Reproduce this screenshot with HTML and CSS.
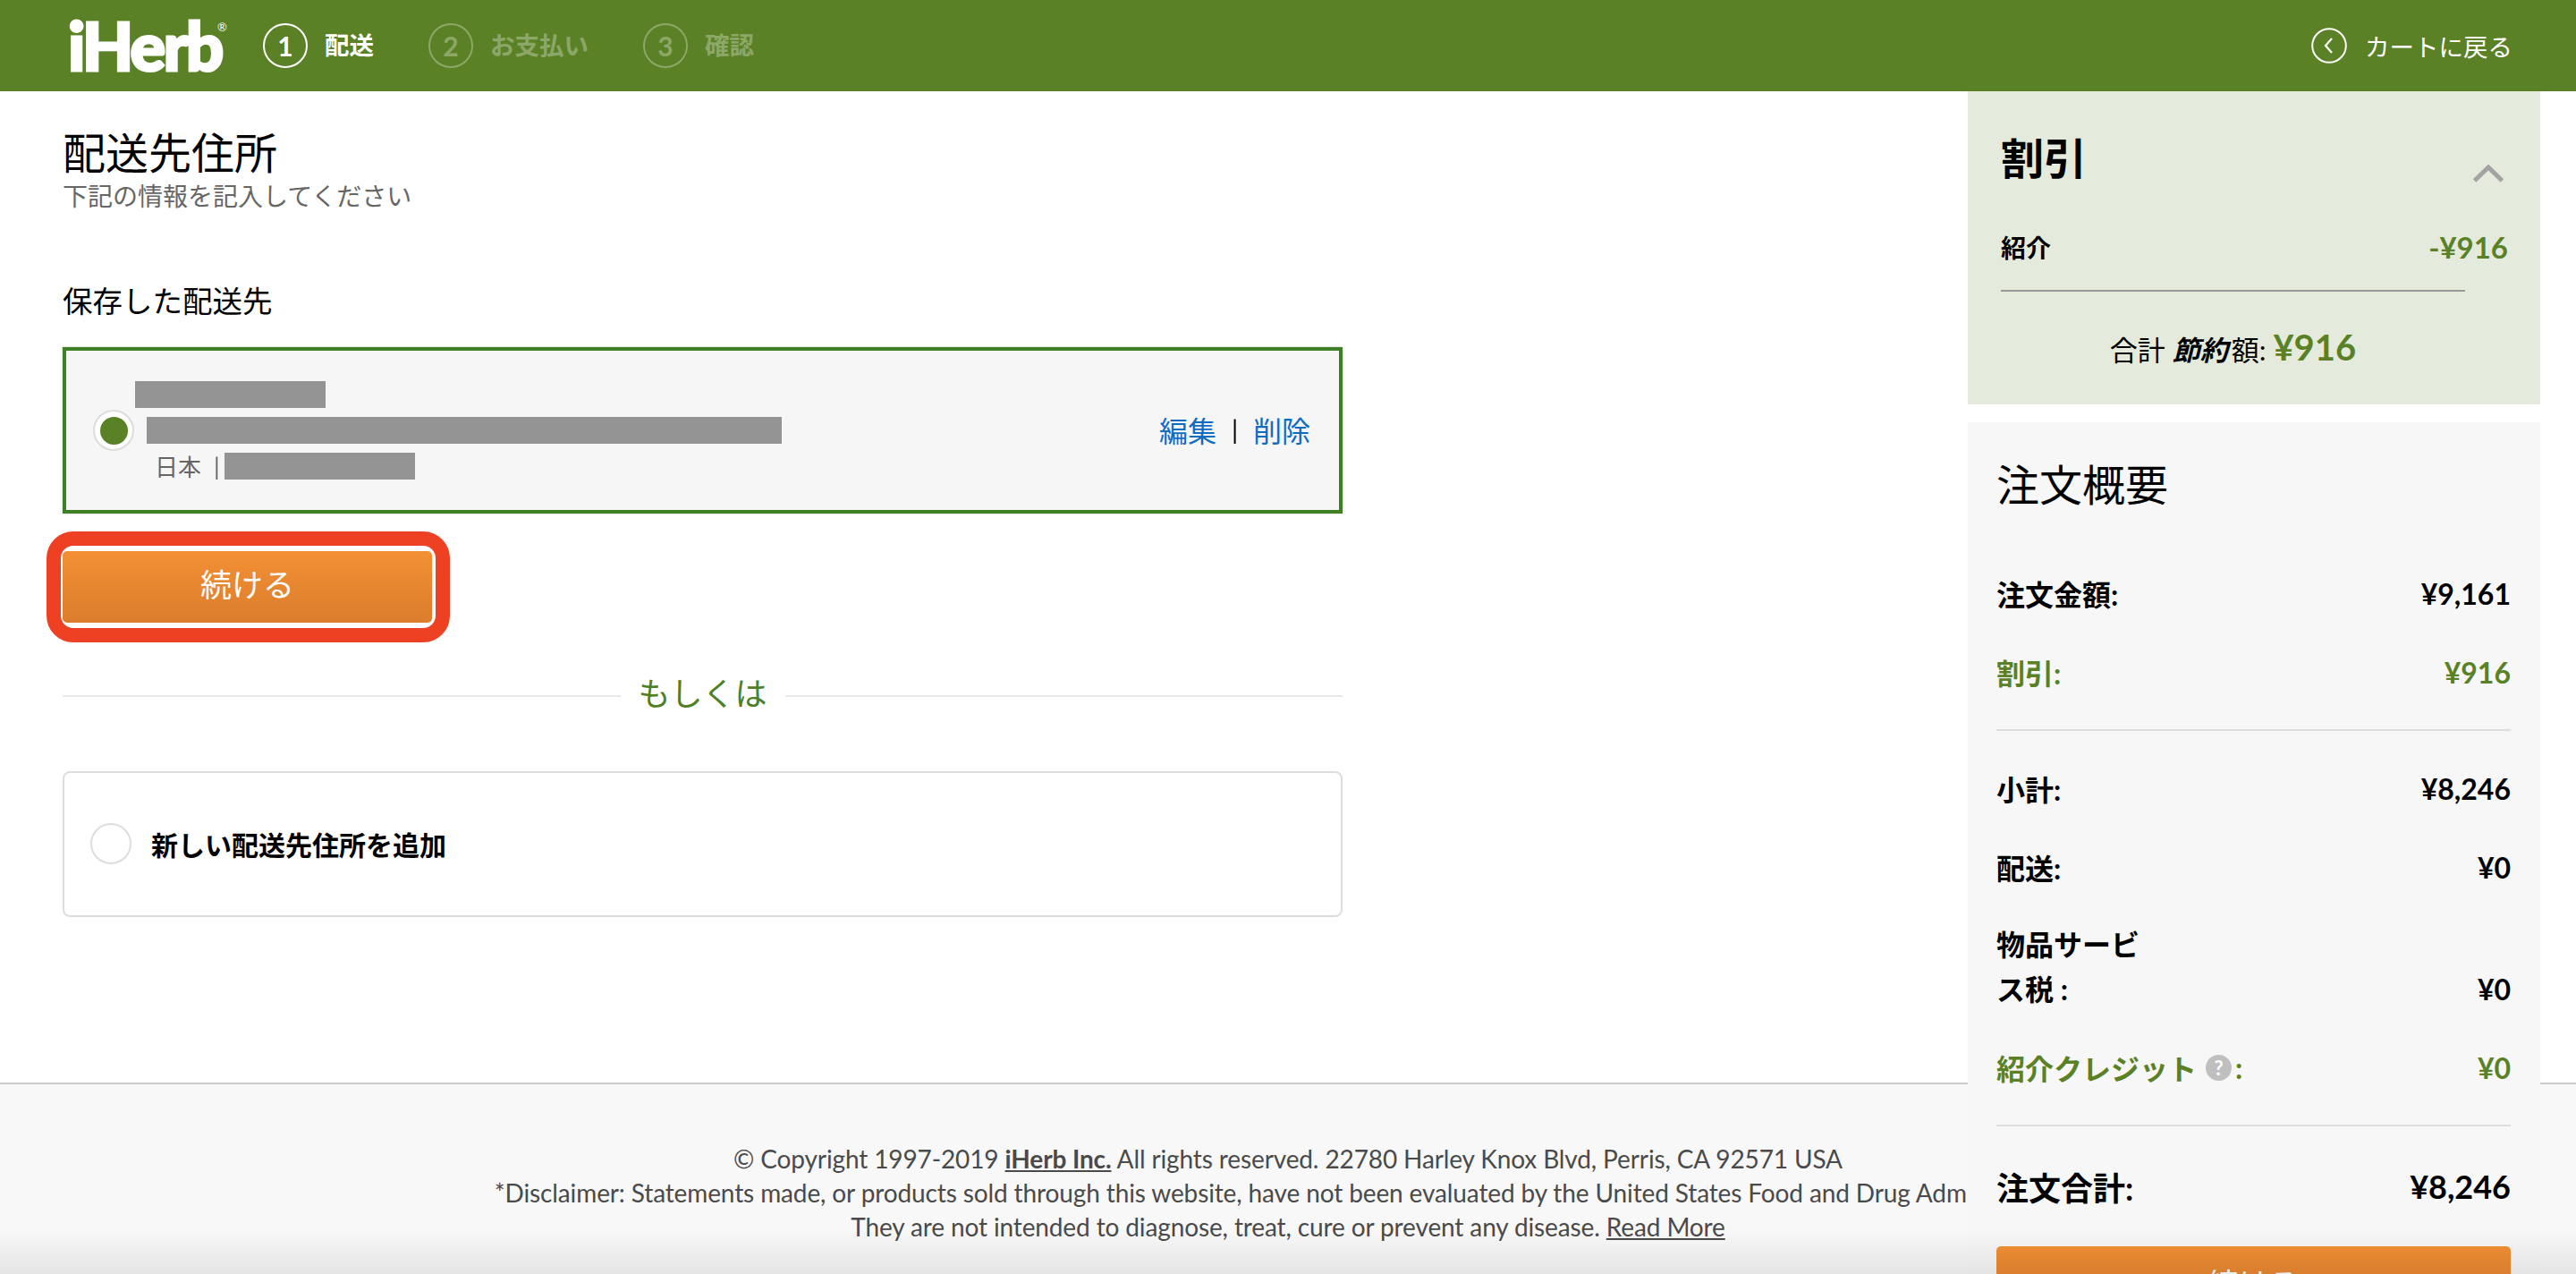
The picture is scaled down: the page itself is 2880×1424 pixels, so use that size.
FILE: index.html
```html
<!DOCTYPE html>
<html lang="ja">
<head>
<meta charset="utf-8">
<title>iHerb 配送先住所</title>
<link rel="stylesheet" href="styles.css">
</head>
<body>
<div class="page">
  <header class="topbar">
    <div class="brand">iHerb<sup class="reg">®</sup></div>
    <ol class="steps">
      <li class="step is-active"><span class="step-num">1</span><span class="step-label">配送</span></li>
      <li class="step"><span class="step-num">2</span><span class="step-label">お支払い</span></li>
      <li class="step"><span class="step-num">3</span><span class="step-label">確認</span></li>
    </ol>
    <a class="back">
      <svg class="back-icon" viewBox="0 0 40 40" aria-hidden="true"><circle cx="20" cy="20" r="18.8" fill="none" stroke="#fff" stroke-width="2"/><path d="M23 12 L16 20 L23 28" fill="none" stroke="#fff" stroke-width="2.2"/></svg>
      <span>カートに戻る</span>
    </a>
  </header>

  <main class="main">
    <h1 class="title">配送先住所</h1>
    <p class="subtitle">下記の情報を記入してください</p>
    <h2 class="saved-heading">保存した配送先</h2>

    <section class="address-card">
      <span class="radio is-checked"><span class="radio-dot"></span></span>
      <div class="address-lines">
        <div class="redact redact-name"></div>
        <div class="redact redact-street"></div>
        <div class="address-country"><span class="country">日本</span><span class="pipe">|</span><span class="redact redact-phone"></span></div>
      </div>
      <div class="address-actions"><a class="link">編集</a><span class="sep">|</span><a class="link">削除</a></div>
    </section>

    <button class="cta cta-main" type="button">続ける</button>

    <div class="or-divider"><span>もしくは</span></div>

    <section class="new-address">
      <span class="radio"></span>
      <strong>新しい配送先住所を追加</strong>
    </section>
  </main>

  <footer class="footer">
    <p>© Copyright 1997-2019 <a class="foot-brand">iHerb Inc.</a> All rights reserved. 22780 Harley Knox Blvd, Perris, CA 92571 USA</p>
    <p class="nowrap">*Disclaimer: Statements made, or products sold through this website, have not been evaluated by the United States Food and Drug Administration.</p>
    <p>They are not intended to diagnose, treat, cure or prevent any disease. <a class="foot-link">Read More</a></p>
  </footer>

  <aside class="sidebar">
    <section class="discount">
      <div class="discount-head">
        <h2>割引</h2>
        <svg class="chevron" viewBox="0 0 34 20" aria-hidden="true"><path d="M1.5 18 L17 3 L32.5 18" fill="none" stroke="#a3a3a3" stroke-width="5"/></svg>
      </div>
      <div class="discount-row"><strong>紹介</strong><span class="discount-amount">-¥916</span></div>
      <div class="discount-total"><span>合計 <b><i class="saved-word">節約</i></b>額:</span> <span class="saved">¥916</span></div>
    </section>

    <section class="summary">
      <h2 class="summary-title">注文概要</h2>
      <div class="row row-first"><span>注文金額:</span><span>¥9,161</span></div>
      <div class="row green"><span>割引:</span><span>¥916</span></div>
      <hr class="rule">
      <div class="row"><span>小計:</span><span>¥8,246</span></div>
      <div class="row"><span>配送:</span><span>¥0</span></div>
      <div class="row row-tall"><span>物品サービ<br>ス税 :</span><span>¥0</span></div>
      <div class="row green"><span class="credit">紹介クレジット<i class="help">?</i>:</span><span>¥0</span></div>
      <hr class="rule">
      <div class="row row-total"><span>注文合計:</span><span>¥8,246</span></div>
      <button class="cta cta-side" type="button">続ける</button>
    </section>
  </aside>

  <div class="bottom-shade"></div>
</div>
</body>
</html>
```

FILE: styles.css
```css
* { box-sizing: border-box; }
html, body { margin: 0; padding: 0; }
body { font-family: "Lato", "Noto Sans CJK JP", sans-serif; color: #000; background: #fff; }
h1, h2, p, ol { margin: 0; padding: 0; font-weight: 400; }
.page { position: relative; width: 2880px; height: 1424px; overflow: hidden; }

.topbar { display: flex; align-items: center; height: 102px; padding: 0 71px 0 76px; background: #5a8125; color: #fff; }
.brand { position: relative; width: 218px; font-family: "Lato", sans-serif; font-weight: 900; font-size: 74px; line-height: 102px; letter-spacing: -2.6px; -webkit-text-stroke: 3px #fff; }
.reg { position: absolute; left: 167px; top: 23px; font-size: 13px; line-height: 14px; font-weight: 400; letter-spacing: 0; -webkit-text-stroke: 0; }
.steps { display: flex; list-style: none; gap: 61px; }
.step { display: flex; align-items: center; gap: 19px; opacity: .3; }
.step.is-active { opacity: 1; }
.step-num { display: flex; align-items: center; justify-content: center; width: 50px; height: 50px; border: 2px solid #fff; border-radius: 50%; font-size: 30px; font-weight: 700; }
.step-label { font-size: 27.5px; font-weight: 700; line-height: 50px; }
.back { display: flex; align-items: center; gap: 20px; margin-left: auto; font-size: 27.5px; }
.back-icon { width: 40px; height: 40px; }

.main { height: 1108px; padding: 41px 0 0 70px; }
.title { font-size: 48px; line-height: 56px; }
.subtitle { margin-top: 3px; font-size: 28px; line-height: 34px; color: #666; }
.saved-heading { margin-top: 80px; font-size: 33.5px; line-height: 40px; }

.address-card { display: flex; align-items: center; width: 1431px; height: 186px; margin-top: 32px; padding: 0 32px 0 30px; border: 4px solid #3f7f25; background: #f6f6f6; box-shadow: 0 0 2px #bbb; }
.radio { display: flex; align-items: center; justify-content: center; flex: none; width: 46px; height: 46px; border: 2px solid #ddd; border-radius: 50%; background: #fff; }
.radio-dot { width: 31px; height: 31px; border-radius: 50%; background: #5a8125; }
.address-lines { display: flex; flex-direction: column; gap: 10px; margin-left: 1px; }
.redact { display: block; height: 30px; background: #949494; }
.redact-name { width: 213px; }
.redact-street { width: 710px; margin-left: 13px; }
.address-country { display: flex; align-items: center; height: 30px; margin-left: 22px; color: #666; font-size: 26px; }
.country { margin-top: -2px; }
.pipe { margin: 0 5px 0 14px; }
.redact-phone { width: 213px; }
.address-actions { display: flex; align-items: center; margin-left: auto; padding-bottom: 3px; font-size: 32px; }
.link { color: #0f6cc2; }
.sep { margin: 0 17px 0 17px; font-size: 28px; }

.cta { display: block; position: relative; border: 0; border-radius: 5px; color: #fff; font-family: inherit; background: linear-gradient(#f39035, #db7d2c); }
.cta-main { width: 413px; height: 80px; margin-top: 42px; padding-bottom: 10px; font-size: 35px; box-shadow: 0 0 0 5px #fff; }
.cta-main::after { content: ""; position: absolute; top: -22px; right: -20px; bottom: -22px; left: -18px; border: 16px solid #ee4023; border-radius: 30px; }

.or-divider { display: flex; align-items: center; gap: 20px; width: 1431px; margin-top: 59px; color: #4e7f22; font-size: 36px; line-height: 40px; }
.or-divider::before, .or-divider::after { content: ""; flex: 1; height: 2px; margin-top: 6px; background: #e8e8e8; }

.new-address { display: flex; align-items: center; gap: 22px; width: 1431px; height: 163px; margin-top: 67px; padding: 0 0 2px 29px; border: 2px solid #ddd; border-radius: 8px; font-size: 30px; }

.footer { height: 214px; padding-top: 64px; border-top: 2px solid #ccc; background: #f8f8f8; color: #4a4a4a; font-size: 28px; line-height: 38px; letter-spacing: -.12px; text-align: center; }
.nowrap { white-space: nowrap; }
.foot-brand { font-weight: 700; text-decoration: underline; }
.foot-link { text-decoration: underline; }

.sidebar { position: absolute; top: 102px; left: 2200px; width: 640px; }
.discount { height: 350px; padding: 0 36px 0 37px; background: #e5ebdc; }
.discount-head { display: flex; justify-content: space-between; height: 136px; padding: 47px 5px 0 0; }
.discount-head h2 { font-size: 48px; font-weight: 700; line-height: 56px; }
.chevron { width: 34px; height: 20px; margin-top: 35px; }
.discount-row { display: flex; align-items: center; justify-content: space-between; height: 76px; font-size: 28px; }
.discount-amount { color: #5a8125; font-size: 33px; font-weight: 700; }
.discount-total { width: 519px; margin-top: 10px; padding-top: 37px; border-top: 2px solid #999; font-size: 31px; line-height: 50px; text-align: center; }
.saved-word { margin-right: 4px; }
.saved { color: #5a8125; font-size: 40px; font-weight: 700; }

.summary { height: 1000px; margin-top: 20px; padding: 34px 33px 0 32px; background: #f7f7f7; }
.summary-title { font-size: 48px; line-height: 72px; }
.row { display: flex; align-items: center; justify-content: space-between; height: 88px; font-size: 32px; font-weight: 700; }
.row-first { margin-top: 41px; }
.row-tall { align-items: flex-end; height: 100px; margin: 18px 0; line-height: 50px; }
.green { color: #5a8125; }
.credit { display: flex; align-items: center; }
.help { display: flex; align-items: center; justify-content: center; width: 29px; height: 29px; margin: 0 4px 0 10px; border-radius: 50%; background: #bfbfbf; color: #fff; font-size: 22px; font-style: normal; }
.rule { height: 2px; margin: 20px 0; border: 0; background: #ddd; }
.row-total { height: 94px; font-size: 36px; }
.cta-side { width: 575px; height: 80px; margin-top: 20px; font-size: 34px; }

.bottom-shade { position: absolute; left: 0; right: 0; bottom: 0; height: 50px; background: linear-gradient(rgba(0,0,0,0), rgba(0,0,0,.08)); pointer-events: none; }
```
